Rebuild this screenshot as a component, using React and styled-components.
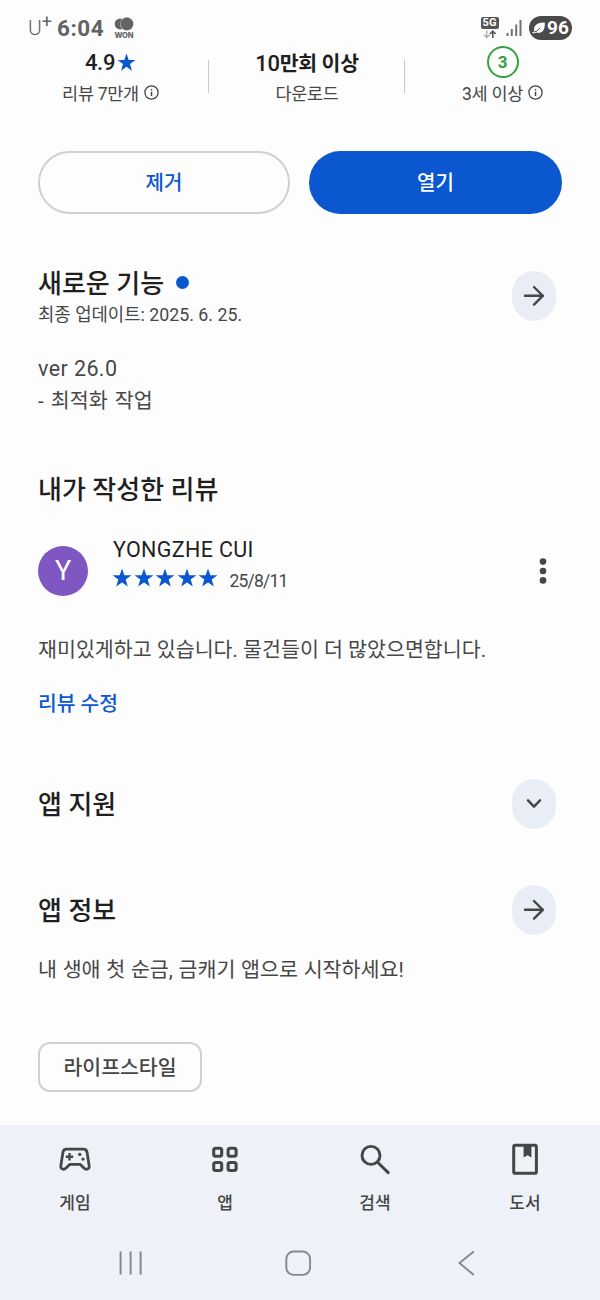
import React from 'react';
import styled, { createGlobalStyle } from 'styled-components';

const Star = ({ size }) => (
  <svg width={size} height={size} viewBox='0 0 20 20' fill='#0b57d0'>
    <path d='M10 0.6L12.3 7.3H19.4L13.7 11.5L15.8 18.6L10 14.4L4.2 18.6L6.3 11.5L0.6 7.3H7.7Z' />
  </svg>
);

const InfoIcon = () => (
  <svg width='15' height='15' viewBox='0 0 15 15' fill='none' stroke='#474747'>
    <circle cx='7.5' cy='7.5' r='6.6' strokeWidth='1.3' />
    <path d='M7.5 6.7V11' strokeWidth='1.5' />
    <path d='M7.5 3.9V5.4' strokeWidth='1.5' />
  </svg>
);

const ArrowIcon = () => (
  <svg
    width='24'
    height='24'
    viewBox='0 0 24 24'
    fill='none'
    stroke='#444746'
    strokeWidth='2.4'
    strokeLinecap='round'
    strokeLinejoin='round'
  >
    <path d='M3 11.8H20.6' />
    <path d='M12 3L20.8 11.8L12 20.6' />
  </svg>
);

const ChevronIcon = () => (
  <svg
    width='24'
    height='24'
    viewBox='0 0 24 24'
    fill='none'
    stroke='#444746'
    strokeWidth='2.5'
    strokeLinecap='round'
    strokeLinejoin='round'
  >
    <path d='M6 8.4L12 14.6L18 8.4' />
  </svg>
);

const GameIcon = () => (
  <svg width='34' height='34' viewBox='0 0 34 34' fill='none' stroke='#444746'>
    <path
      d='M8.6 7.2H25.4C27.4 7.2 28.8 8.6 29.1 10.5L31.2 24C31.6 27.2 28.2 28.2 26.2 26.2L22.3 22.4H11.7L7.8 26.2C5.8 28.2 2.4 27.2 2.8 24L4.9 10.5C5.2 8.6 6.6 7.2 8.6 7.2Z'
      strokeWidth='2.8'
      strokeLinejoin='round'
    />
    <path d='M7.8 14.7H15.2M11.5 11V18.4' strokeWidth='2.4' />
    <circle cx='21.8' cy='12.4' r='1.7' fill='#444746' stroke='none' />
    <circle cx='25' cy='17.1' r='1.7' fill='#444746' stroke='none' />
  </svg>
);

const AppsIcon = () => (
  <svg width='34' height='34' viewBox='0 0 34 34' fill='none' stroke='#444746' strokeWidth='3.1'>
    <rect x='5.7' y='6.3' width='8' height='8' rx='2' />
    <rect x='20.1' y='6.3' width='8' height='8' rx='2' />
    <rect x='5.7' y='20.5' width='8' height='8' rx='2' />
    <rect x='20.1' y='20.5' width='8' height='8' rx='2' />
  </svg>
);

const SearchIcon = () => (
  <svg width='34' height='34' viewBox='0 0 34 34' fill='none' stroke='#444746' strokeLinecap='round'>
    <circle cx='13' cy='13.4' r='9' strokeWidth='2.9' />
    <path d='M19.6 20.2L30.2 30.6' strokeWidth='3' />
  </svg>
);

const BookIcon = () => (
  <svg width='34' height='34' viewBox='0 0 34 34'>
    <rect
      x='5.7'
      y='3.3'
      width='22.7'
      height='28'
      rx='1.6'
      fill='none'
      stroke='#444746'
      strokeWidth='3'
    />
    <path d='M15.6 3.6H23.4V15.4L19.5 13.2L15.6 15.4Z' fill='#444746' />
  </svg>
);

const WonIcon = () => (
  <svg width='20' height='14' viewBox='0 0 20 14' fill='#636363'>
    <circle cx='6' cy='7' r='5.4' />
    <circle cx='12.7' cy='6.9' r='6.7' fill='#b5b5b5' />
    <circle cx='13' cy='6.9' r='6.3' />
  </svg>
);

const DataArrows = () => (
  <svg width='14' height='9' viewBox='0 0 14 9' fill='none'>
    <path d='M3.8 0.5V7M1 4.7L3.8 7.6L6.6 4.7' stroke='#aaaaaa' strokeWidth='1.3' />
    <path d='M9.8 8V1.5M6.9 4L9.8 1.2L12.7 4' stroke='#555555' strokeWidth='1.6' />
  </svg>
);

const SignalIcon = () => (
  <svg width='17' height='17' viewBox='0 0 17 17' stroke='#707070' strokeWidth='2'>
    <path d='M1.5 13V16M5.8 9V16M10.2 4.5V16M14.5 0V16' />
  </svg>
);

const LeafIcon = () => (
  <svg width='14' height='12' viewBox='0 0 14 12'>
    <path
      d='M2.4 9.8C1.2 5.2 3.2 0.4 12.8 0.6C13.2 8.2 10.2 12 5.2 10.6C4.1 11.1 2.4 11.4 0.6 11.5L0.4 10Z'
      fill='#ffffff'
    />
    <path d='M2.4 10C4.6 9.2 6.6 7.8 8.2 5.8' stroke='#4a4a4a' strokeWidth='1' fill='none' />
  </svg>
);

const tabs = [
  { label: '게임', icon: <GameIcon /> },
  { label: '앱', icon: <AppsIcon /> },
  { label: '검색', icon: <SearchIcon /> },
  { label: '도서', icon: <BookIcon /> },
];

export default function App() {
  return (
    <Screen>
      <GlobalStyle />
      <StatusBar>
        <StatusGroup>
          <Carrier>
            U<Plus>+</Plus>
          </Carrier>
          <Clock>6:04</Clock>
          <Won>
            <WonIcon />
            <WonLabel>WON</WonLabel>
          </Won>
        </StatusGroup>
        <StatusGroup>
          <Network>
            <NetworkLabel>5G</NetworkLabel>
            <DataArrows />
          </Network>
          <SignalIcon />
          <Battery>
            <LeafIcon />
            96
          </Battery>
        </StatusGroup>
      </StatusBar>

      <Stats>
        <Stat>
          <StatValue $latin>
            4.9 <Star size={19} />
          </StatValue>
          <StatLabel>
            리뷰 7만개 <InfoIcon />
          </StatLabel>
        </Stat>
        <Stat>
          <StatValue>
            <span>
              <Count>10</Count>만회 이상
            </span>
          </StatValue>
          <StatLabel>다운로드</StatLabel>
        </Stat>
        <Stat>
          <StatValue>
            <Rating>3</Rating>
          </StatValue>
          <StatLabel>
            3세 이상 <InfoIcon />
          </StatLabel>
        </Stat>
      </Stats>

      <Actions>
        <ActionButton>제거</ActionButton>
        <ActionButton $primary>열기</ActionButton>
      </Actions>

      <Section $top={51}>
        <SectionHeader>
          <div>
            <Heading>
              새로운 기능 <Dot />
            </Heading>
            <Updated>최종 업데이트: 2025. 6. 25.</Updated>
          </div>
          <RoundButton aria-label='새로운 기능'>
            <ArrowIcon />
          </RoundButton>
        </SectionHeader>
        <Body $top={26}>
          <Version>ver 26.0</Version>
          <Change>- 최적화 작업</Change>
        </Body>
      </Section>

      <Section $top={54}>
        <Heading>내가 작성한 리뷰</Heading>
        <Reviewer>
          <Avatar>Y</Avatar>
          <ReviewerInfo>
            <Name>YONGZHE CUI</Name>
            <StarRow>
              {[1, 2, 3, 4, 5].map((n) => (
                <Star key={n} size={20} />
              ))}
              <ReviewDate>25/8/11</ReviewDate>
            </StarRow>
          </ReviewerInfo>
          <MoreButton aria-label='더보기'>
            <svg width='8' height='28' viewBox='0 0 8 28' fill='#444746'>
              <circle cx='4' cy='4.6' r='3.3' />
              <circle cx='4' cy='14' r='3.3' />
              <circle cx='4' cy='23.4' r='3.3' />
            </svg>
          </MoreButton>
        </Reviewer>
        <Body $top={38}>재미있게하고 있습니다. 물건들이 더 많았으면합니다.</Body>
        <EditLink>리뷰 수정</EditLink>
      </Section>

      <Section $top={59}>
        <SectionHeader>
          <Heading>앱 지원</Heading>
          <RoundButton aria-label='앱 지원'>
            <ChevronIcon />
          </RoundButton>
        </SectionHeader>
      </Section>

      <Section $top={56}>
        <SectionHeader>
          <Heading>앱 정보</Heading>
          <RoundButton aria-label='앱 정보'>
            <ArrowIcon />
          </RoundButton>
        </SectionHeader>
        <Body $top={19} $spaced>
          내 생애 첫 순금, 금캐기 앱으로 시작하세요!
        </Body>
        <Chip>라이프스타일</Chip>
      </Section>

      <BottomArea>
        <Tabs>
          {tabs.map((tab) => (
            <Tab key={tab.label}>
              {tab.icon}
              <TabLabel>{tab.label}</TabLabel>
            </Tab>
          ))}
        </Tabs>
        <SystemNav>
          <svg width='28' height='28' viewBox='0 0 28 28' stroke='#85888d' strokeWidth='2'>
            <path d='M4.6 2.5V25.5M14.6 2.5V25.5M24.6 2.5V25.5' />
          </svg>
          <svg width='28' height='28' viewBox='0 0 28 28' fill='none' stroke='#85888d' strokeWidth='1.9'>
            <rect x='2.3' y='2.5' width='23.8' height='23.4' rx='7.5' />
          </svg>
          <svg width='28' height='28' viewBox='0 0 28 28' fill='none' stroke='#85888d' strokeWidth='1.9'>
            <path d='M22.8 2.6L8.5 14L22.8 26' />
          </svg>
        </SystemNav>
      </BottomArea>
    </Screen>
  );
}

const GlobalStyle = createGlobalStyle`
  * {
    box-sizing: border-box;
  }
  body {
    margin: 0;
    background: #fdfdfd;
  }
  svg {
    display: block;
    flex: none;
  }
  button {
    font-family: inherit;
    padding: 0;
    border: 0;
    background: none;
  }
`;

const Screen = styled.div`
  width: 600px;
  height: 1300px;
  display: flex;
  flex-direction: column;
  overflow: hidden;
  background: #fdfdfd;
  color: #1f1f1f;
  font-family: Roboto, 'Noto Sans CJK KR', sans-serif;
  white-space: nowrap;
`;
const StatusBar = styled.div`
  height: 46px;
  padding: 10px 28px 0;
  display: flex;
  justify-content: space-between;
  align-items: flex-start;
`;
const StatusGroup = styled.div`
  height: 36px;
  display: flex;
  align-items: center;
  color: #636363;
`;
const Carrier = styled.div`
  font: 300 21px/38px Roboto, sans-serif;
  display: flex;
  width: 29px;
`;
const Plus = styled.span`
  font-size: 18px;
  line-height: 25px;
  font-weight: 400;
`;
const Clock = styled.div`
  font: 700 22.5px/37px Roboto, sans-serif;
  letter-spacing: 0.5px;
  width: 57px;
`;
const Won = styled.div`
  width: 20px;
  padding-top: 1px;
  display: flex;
  flex-direction: column;
  align-items: center;
`;
const WonLabel = styled.div`
  font: 800 7.5px/9px Inter, sans-serif;
`;
const Network = styled.div`
  width: 19px;
  margin-right: 7px;
  display: flex;
  flex-direction: column;
  align-items: center;
  gap: 1px;
`;
const NetworkLabel = styled.div`
  width: 18px;
  border-radius: 2px;
  background: #555555;
  color: #ffffff;
  text-align: center;
  font: 700 11px/12px Roboto, sans-serif;
`;
const Battery = styled.div`
  width: 43px;
  height: 24px;
  margin-left: 6px;
  display: flex;
  align-items: center;
  justify-content: center;
  gap: 1px;
  border-radius: 12px;
  background: #4a4a4a;
  color: #ffffff;
  font: 700 19px/24px Roboto, sans-serif;
`;

const Stats = styled.div`
  height: 62px;
  padding-left: 12px;
  display: grid;
  grid-template-columns: 197px 196px 195px;
`;
const Stat = styled.div`
  display: flex;
  flex-direction: column;
  align-items: center;
  background: linear-gradient(#c9c9c9, #c9c9c9) right 14px / 1px 33px no-repeat;

  &:last-child {
    background: none;
  }
`;
const StatValue = styled.div`
  height: 32px;
  display: flex;
  align-items: center;
  gap: 2px;
  font-weight: ${(props) => (props.$latin ? 500 : 700)};
  font-size: ${(props) => (props.$latin ? 22 : 20.5)}px;
  letter-spacing: -0.3px;
`;
const Count = styled.span`
  font-weight: 500;
  font-size: 22px;
`;
const StatLabel = styled.div`
  height: 29px;
  display: flex;
  align-items: center;
  gap: 5px;
  font-size: 17.5px;
  letter-spacing: -0.3px;
  color: #474747;
`;
const Rating = styled.div`
  width: 32px;
  height: 32px;
  border: 2px solid #34a042;
  border-radius: 50%;
  text-align: center;
  font-size: 17px;
  line-height: 29px;
  color: #34a042;
`;

const Actions = styled.div`
  margin: 43px 38px 0;
  display: grid;
  grid-template-columns: 252px 253px;
  gap: 19px;
`;
const ActionButton = styled.button`
  height: 63px;
  border-radius: 32px;
  border: ${(props) => (props.$primary ? '0' : '2px solid #d0d0d0')};
  background: ${(props) => (props.$primary ? '#0b57d0' : 'transparent')};
  color: ${(props) => (props.$primary ? '#ffffff' : '#0b57d0')};
  font-size: 20px;
  line-height: 32px;
  font-weight: 500;
`;

const Section = styled.section`
  margin: ${(props) => props.$top}px 38px 0;
`;
const SectionHeader = styled.div`
  display: flex;
  justify-content: space-between;
  align-items: center;
  min-height: 50px;
  padding-right: 6px;
`;
const Heading = styled.h2`
  margin: 0;
  padding-top: 2px;
  display: flex;
  align-items: center;
  gap: 12px;
  font-size: 26px;
  line-height: 34px;
  font-weight: 500;
`;
const Dot = styled.span`
  width: 13px;
  height: 13px;
  margin-bottom: 3px;
  border-radius: 50%;
  background: #0b57d0;
`;
const Updated = styled.div`
  margin-bottom: -2px;
  font-size: 17.8px;
  line-height: 28px;
  color: #474747;
`;
const RoundButton = styled.button`
  width: 44px;
  height: 50px;
  flex: none;
  display: flex;
  align-items: center;
  justify-content: center;
  border-radius: 22px;
  background: #e8edf6;
`;
const Body = styled.div`
  margin-top: ${(props) => props.$top}px;
  font-size: 20.6px;
  line-height: 32px;
  word-spacing: ${(props) => (props.$spaced ? '0.6px' : 'normal')};
  color: #474747;
`;
const Version = styled.div`
  font-size: 21.5px;
  letter-spacing: 0.4px;
`;
const Change = styled.div`
  word-spacing: 2px;
`;

const Reviewer = styled.div`
  margin-top: 29px;
  height: 60px;
  display: flex;
  align-items: flex-start;
`;
const Avatar = styled.div`
  width: 50px;
  height: 50px;
  margin: 10px 25px 0 0;
  border-radius: 50%;
  background: #7e57c2;
  color: #ffffff;
  text-align: center;
  font-size: 27px;
  line-height: 51px;
`;
const ReviewerInfo = styled.div`
  flex: 1;
`;
const Name = styled.div`
  font-size: 21.5px;
  line-height: 28px;
  letter-spacing: 0.35px;
`;
const StarRow = styled.div`
  display: flex;
  align-items: center;
  gap: 1.5px;
  height: 28px;
  margin-left: -1px;
`;
const ReviewDate = styled.span`
  margin: 5px 0 0 10px;
  font-size: 17.5px;
  line-height: 28px;
  letter-spacing: -0.8px;
  color: #474747;
`;
const MoreButton = styled.button`
  width: 8px;
  margin: 21px 15px 0 0;
`;
const EditLink = styled.div`
  margin-top: 22px;
  font-size: 20.4px;
  line-height: 32px;
  font-weight: 500;
  color: #0b57d0;
`;
const Chip = styled.div`
  width: 164px;
  height: 50px;
  margin-top: 56px;
  padding-bottom: 3px;
  display: flex;
  align-items: center;
  justify-content: center;
  border: 2px solid #d0d0d0;
  border-radius: 12px;
  color: #474747;
  font-size: 20.5px;
  font-weight: 500;
`;

const BottomArea = styled.nav`
  height: 175px;
  margin-top: auto;
  background: #eef2f8;
`;
const Tabs = styled.div`
  height: 103px;
  padding-top: 17px;
  display: grid;
  grid-template-columns: repeat(4, 150px);
`;
const Tab = styled.div`
  display: flex;
  flex-direction: column;
  align-items: center;
`;
const TabLabel = styled.div`
  margin-top: 14px;
  font-size: 17px;
  line-height: 26px;
  font-weight: 500;
  color: #444746;
`;
const SystemNav = styled.div`
  height: 70px;
  padding: 0 121px 0 116px;
  display: flex;
  align-items: center;
  justify-content: space-between;
`;
